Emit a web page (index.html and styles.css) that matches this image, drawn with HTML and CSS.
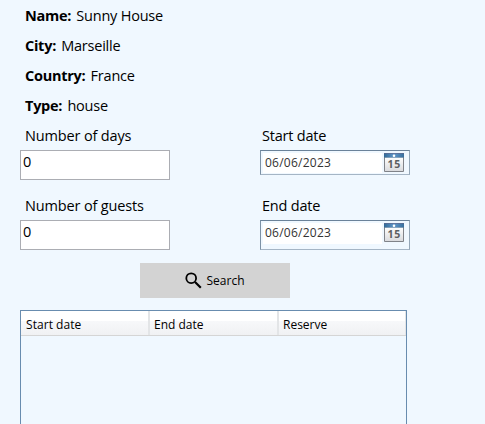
FILE: index.html
```html
<!DOCTYPE html>
<html lang="en">
<head>
<meta charset="utf-8">
<title>Reservation</title>
<link rel="stylesheet" href="styles.css">
</head>
<body>
<svg class="defs" width="0" height="0">
  <defs>
    <linearGradient id="page" x1="0" y1="0" x2="0" y2="1"><stop offset="0" stop-color="#fff"/><stop offset="1" stop-color="#d9dadd"/></linearGradient>
    <linearGradient id="band" x1="0" y1="0" x2="1" y2="0"><stop offset="0" stop-color="#326895"/><stop offset=".5" stop-color="#5d96c9"/><stop offset="1" stop-color="#386e9c"/></linearGradient>
    <symbol id="calendar" viewBox="0 0 20 19">
      <path d="M.5 4h19v14.500H.5z" fill="url(#page)" stroke="#808389"/>
      <path d="M0 0h20v4.500H0z" fill="url(#band)"/>
      <path d="M0 .5h20" stroke="#668" stroke-opacity=".6"/>
      <circle cx="10" cy="2.700" r="1.300" fill="#fff"/>
      <text x="10.300" y="15.200" text-anchor="middle" class="day">15</text>
    </symbol>
  </defs>
</svg>
<main>
  <dl class="details">
    <div><dt>Name:</dt><dd>Sunny House</dd></div>
    <div><dt>City:</dt><dd>Marseille</dd></div>
    <div><dt>Country:</dt><dd>France</dd></div>
    <div><dt>Type:</dt><dd>house</dd></div>
  </dl>
  <form class="form">
    <div class="field"><label>Number of days</label><div class="box">0</div></div>
    <div class="field"><label class="start">Start date</label><div class="picker short"><span class="date">06/06/2023</span><svg class="cal"><use href="#calendar"/></svg></div></div>
    <div class="field"><label>Number of guests</label><div class="box">0</div></div>
    <div class="field"><label class="end">End date</label><div class="picker"><span class="date">06/06/2023</span><svg class="cal"><use href="#calendar"/></svg></div></div>
  </form>
  <button class="search" type="button">
    <svg width="17" height="17" viewBox="0 0 17 17" fill="none" stroke="#000"><circle cx="6.200" cy="6.200" r="4.900" stroke-width="1.800"/><path d="M10 10l5.800 5.800" stroke-width="2.200"/></svg>
    <span>Search</span>
  </button>
  <section class="grid">
    <div class="head"><span>Start date</span><span>End date</span><span>Reserve</span></div>
  </section>
</main>
</body>
</html>
```
FILE: styles.css
```css
* { box-sizing: border-box; }
body { margin: 0; height: 424px; overflow: hidden; background: #f0f8ff; color: #000; font: 14.5px/20px "Open Sans", "Noto Sans", sans-serif; white-space: nowrap; }
.defs { position: absolute; }
main { width: 485px; height: 424px; padding-left: 20px; overflow: hidden; }
.details { margin: 0; padding: 0 0 0 5px; }
.details > div { display: flex; gap: 5.2px; height: 30px; padding-top: 6px; }
dt { font-weight: 700; letter-spacing: -.27px; }
dd { margin: 0; letter-spacing: -.22px; }
.form { display: grid; grid-template-columns: 150px 150px; column-gap: 90px; grid-auto-rows: 70px; margin: 0; }
.field label { display: block; height: 30px; padding: 6px 0 0 5px; letter-spacing: -.15px; }
.field .start, .field .end { padding-left: 2px; letter-spacing: -.2px; }
.box { height: 30px; padding: 1px 2px; border: 1px solid #abadb3; background: #fff; }
.picker { display: flex; justify-content: space-between; height: 30px; padding: 2px 5px 0 2px; border: 1px solid; border-color: #6b8299 #94a6b7 #a5b5c5 #7c91a5; }
.picker.short { height: 25px; }
.date { width: 119px; height: 21px; padding-left: 2px; background: #fff; color: #333; font-size: 12px; line-height: 20px; letter-spacing: .25px; }
.short .date { height: 20px; }
.cal { width: 20px; height: 19px; }
.day { font: 700 10.5px "Open Sans", sans-serif; letter-spacing: .7px; fill: #5c5e62; }
.search { display: flex; align-items: center; gap: 4.500px; width: 150px; height: 35px; margin: 3px 0 12px 120px; padding: 0 0 0 45px; border: 0; background: #d3d3d3; color: #000; font: 12px/18px "Open Sans", "Noto Sans", sans-serif; }
.grid { width: 387px; height: 130px; border: 1px solid #688caf; }
.head { display: grid; grid-template-columns: 129px 129px 127px; height: 25px; border-bottom: 1px solid #d5d5d5; background: linear-gradient(#fff 0 40%, #f7f8fa 41%, #f0f1f3); font-size: 12px; line-height: 27px; }
.head span { height: 24px; padding-left: 5px; border-right: 2px solid #e3e5e7; letter-spacing: .05px; }
.head span + span { padding-left: 4px; letter-spacing: 0; }
.head span:last-child { border-right-width: 1px; }
```
